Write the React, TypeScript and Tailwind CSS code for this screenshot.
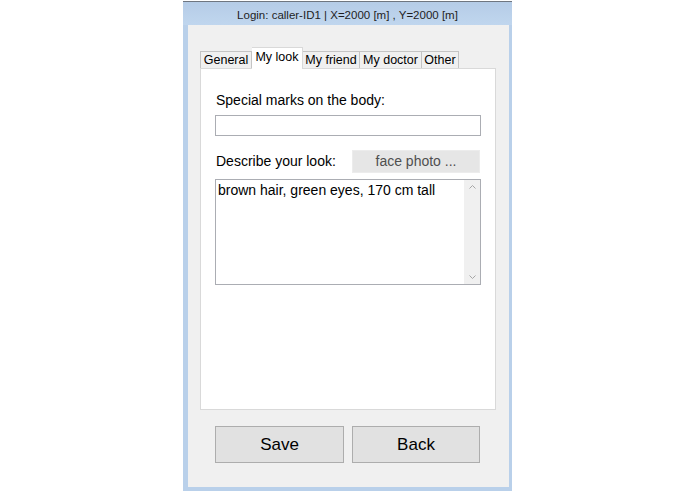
import React from "react";

const F = { fontFamily: '"Liberation Sans", Arial, sans-serif' };

function Chevron({ up }: { up?: boolean }) {
  return (
    <svg width="7" height="4" viewBox="0 0 7 4" className="block">
      <path d={up ? "M0.5 3.5 L3.5 0.5 L6.5 3.5" : "M0.5 0.5 L3.5 3.5 L6.5 0.5"} fill="none" stroke="#a6a6a6" strokeWidth="1" />
    </svg>
  );
}

export default function App() {
  const tabs = [
    { label: "General", w: "w-[52px]" },
    { label: "My look", w: "w-[51px]", sel: true },
    { label: "My friend", w: "w-[57px]" },
    { label: "My doctor", w: "w-[62px]" },
    { label: "Other", w: "w-[37px]" },
  ];
  return (
    <div className="w-[695px] h-[494px] bg-white flex justify-center" style={F}>
      <div className="mt-px w-[329px] h-[490px] border-t border-[#6f7680] bg-[#b9d0ea] flex flex-col pl-[5px] pr-[3px] pb-[4px]">
        <div className="h-[23px] flex items-center justify-center pt-[5px] text-[11.5px] text-[#1e1e1e] bg-gradient-to-b from-[#b5cce7] to-[#c0d6ee] -ml-[5px] -mr-[3px]">
          Login: caller-ID1 | X=2000 [m] , Y=2000 [m]
        </div>
        <div className="flex-1 bg-[#f0f0f0] flex flex-col pl-[12px] pr-[13px] pt-[22px]">
          <div className="flex items-end h-[21px] text-[12.5px] text-black">
            {tabs.map((t, i) =>
              t.sel ? (
                <div
                  key={t.label}
                  className={`${t.w} h-[22px] -mb-px relative z-10 bg-white border-t border-r border-[#d9d9d9] flex items-start justify-center pt-[1px] leading-[16px]`}
                >
                  {t.label}
                </div>
              ) : (
                <div
                  key={t.label}
                  className={`${t.w} h-[17px] bg-[#f0f0f0] border-t border-r border-[#c4c4c4] ${i === 0 ? "border-l" : ""} flex items-center justify-center leading-[16px]`}
                >
                  {t.label}
                </div>
              )
            )}
          </div>
          <div className="h-[342px] bg-white border border-[#d9d9d9] pl-[14px] pr-[14px] pt-[23px] text-[14px] text-black">
            <div className="leading-[17px] pl-px">Special marks on the body:</div>
            <div className="mt-[6px] h-[21px] border border-[#abadb3] bg-white" />
            <div className="mt-[14px] flex items-center justify-between">
              <div className="leading-[17px] pl-px">Describe your look:</div>
              <div className="w-[128px] h-[23px] mr-px bg-[#e6e6e6] border border-[#ececec] flex items-center justify-center text-[#4f4f4f]">
                face photo ...
              </div>
            </div>
            <div className="mt-[6px] h-[106px] border border-[#abadb3] bg-white flex">
              <div className="flex-1 pl-[2px] pt-[2px] leading-[17px]">brown hair, green eyes, 170 cm tall</div>
              <div className="w-[16px] bg-[#f0f0f0] flex flex-col items-center justify-between py-[5px]">
                <Chevron up />
                <Chevron />
              </div>
            </div>
          </div>
          <div className="mt-[16px] flex gap-[8px] pl-[15px]">
            <div className="w-[129px] h-[37px] bg-[#e1e1e1] border border-[#adadad] flex items-center justify-center text-[17px] text-black">
              Save
            </div>
            <div className="w-[128px] h-[37px] bg-[#e1e1e1] border border-[#adadad] flex items-center justify-center text-[17px] text-black">
              Back
            </div>
          </div>
        </div>
      </div>
    </div>
  );
}
